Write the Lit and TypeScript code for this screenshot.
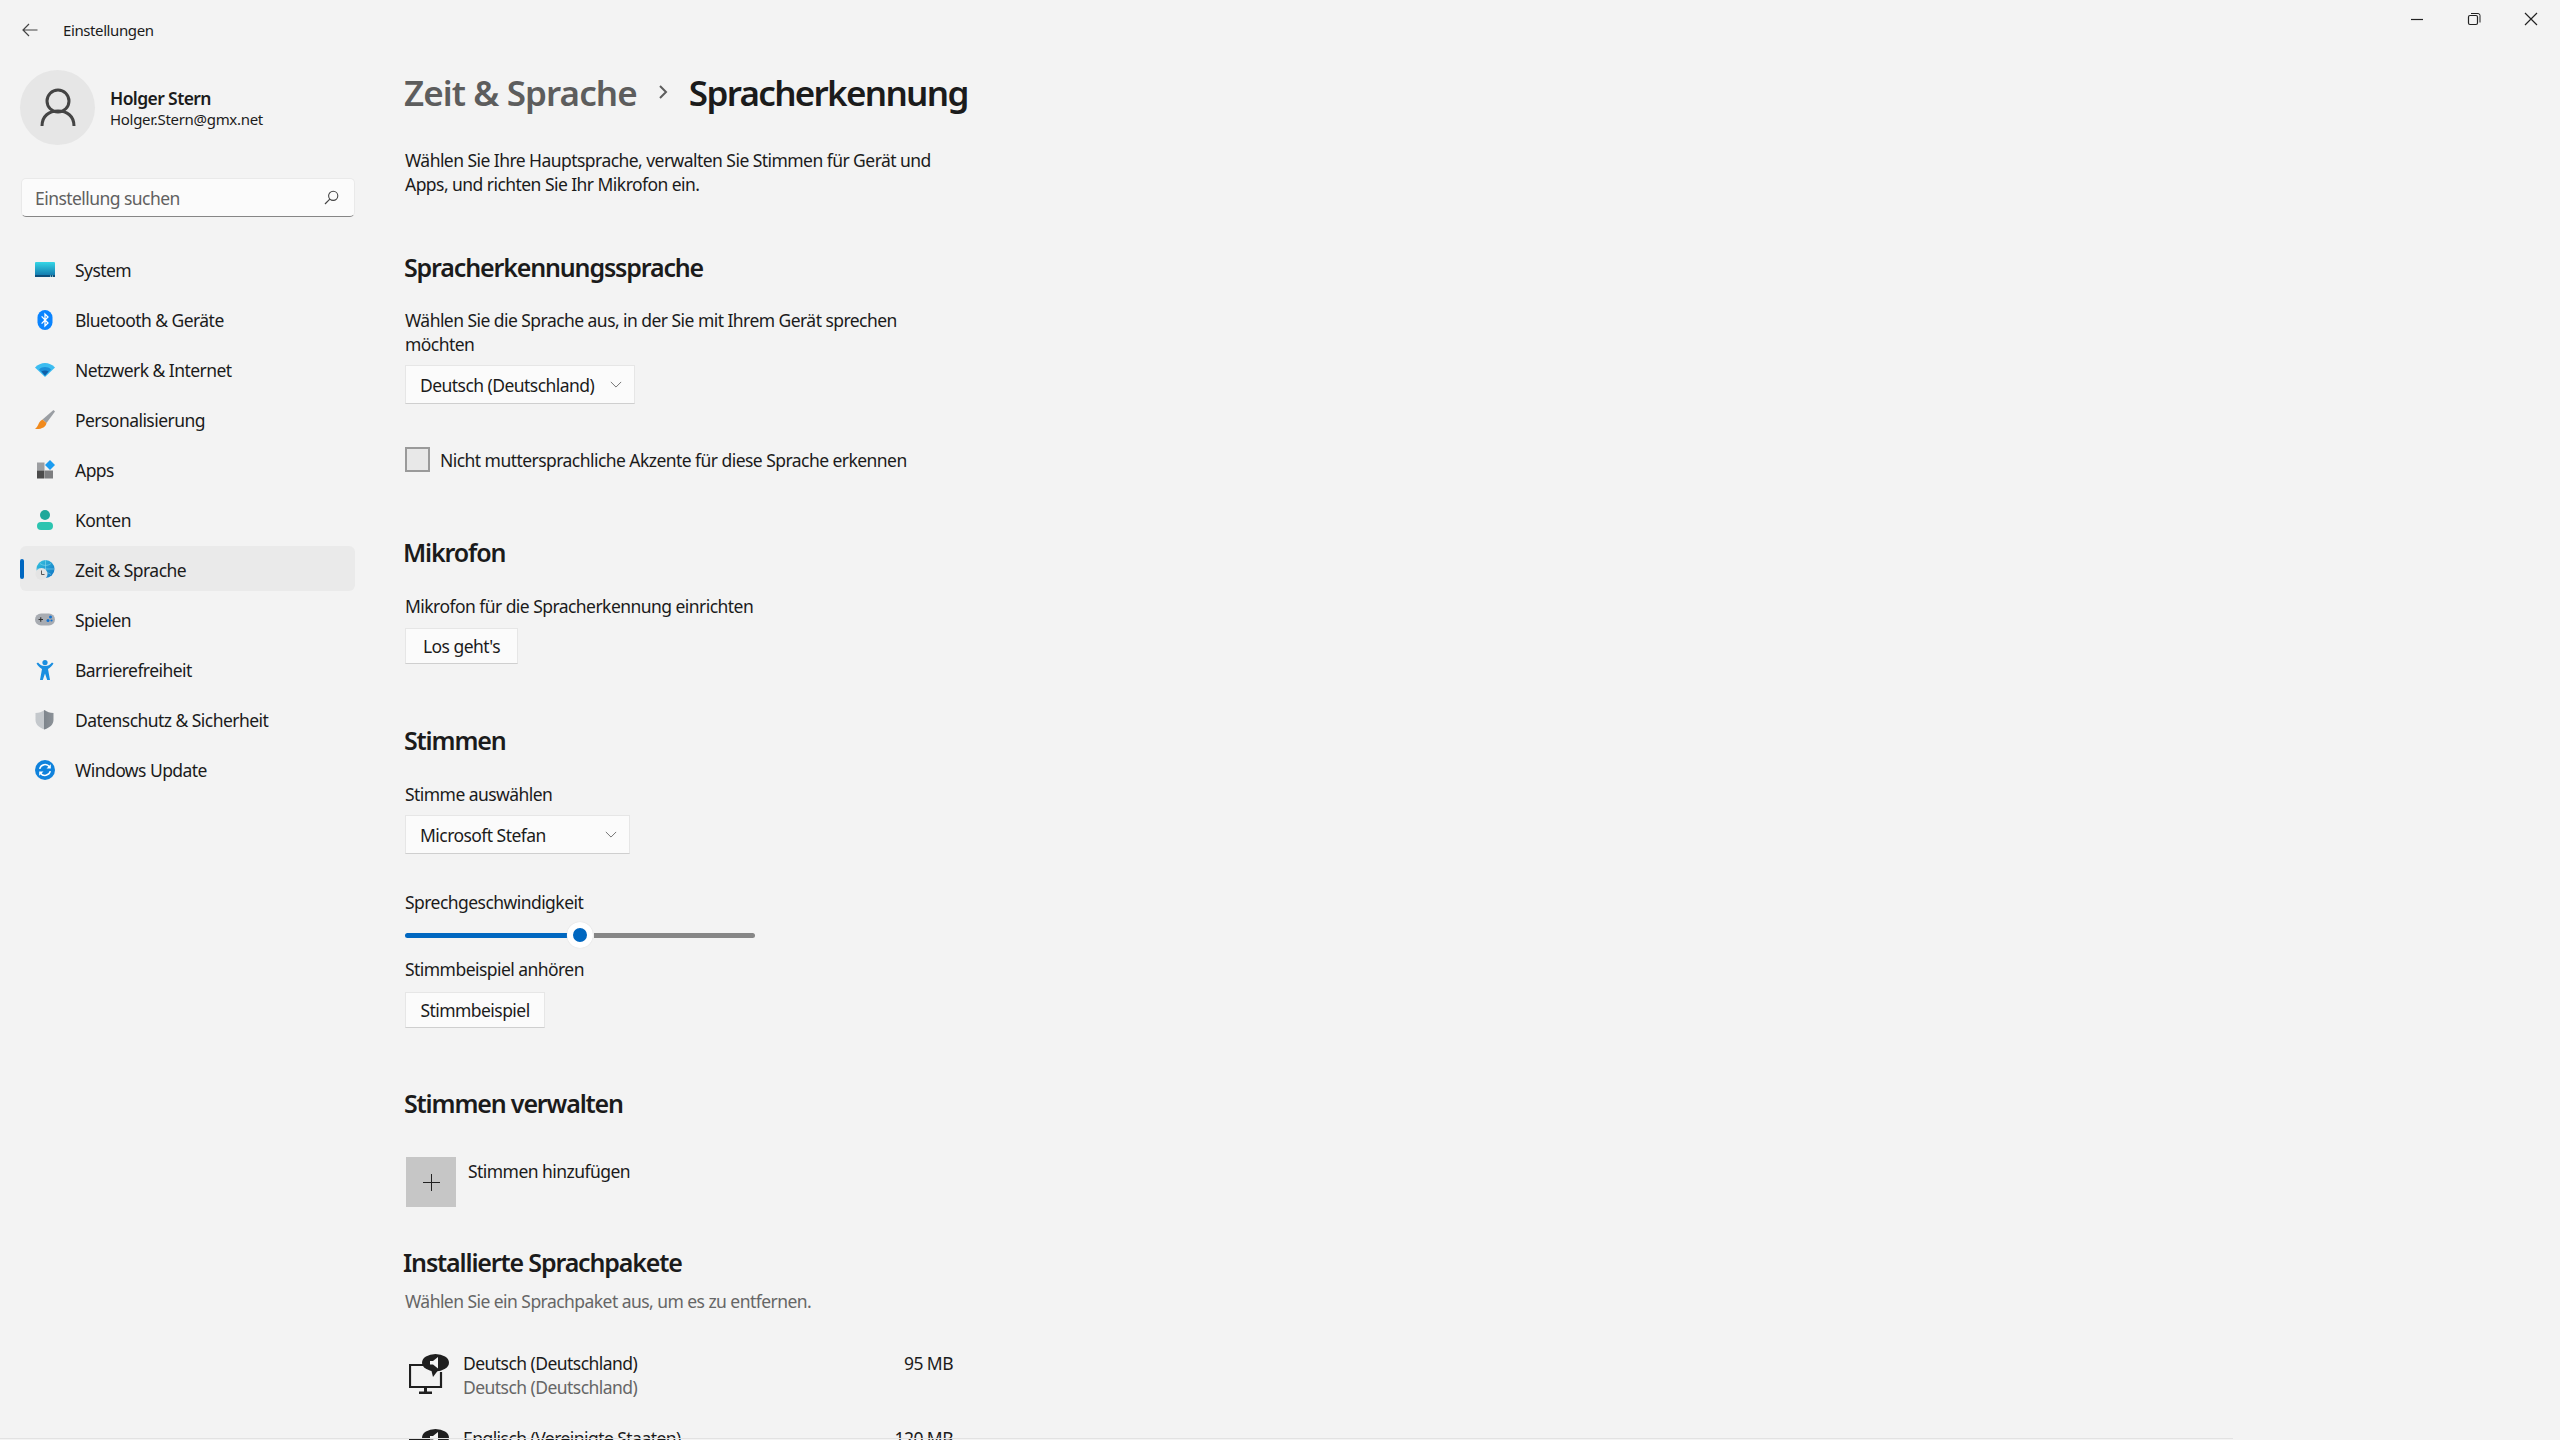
import { LitElement, css, html, svg } from "lit";
import { customElement } from "lit/decorators.js";

const navIcons: Record<string, unknown> = {
  system: svg`<defs><linearGradient id="sy" x1="0" y1="0" x2="0" y2="1"><stop offset="0" stop-color="#35d6e6"/><stop offset="1" stop-color="#0f6fa8"/></linearGradient></defs>
    <rect x="0" y="2" width="20" height="15" rx="1" fill="url(#sy)"/><rect x="0" y="15" width="20" height="2" fill="#0d4f7c"/><rect x="15" y="15.6" width="1" height="1" fill="#cfe"/><rect x="17" y="15.6" width="1" height="1" fill="#cfe"/>`,
  bluetooth: svg`<rect x="2.5" y="0" width="15" height="20" rx="7.5" fill="#0a84ff"/><path d="M6.6 6.4 13 13l-3 3V4l3 3-6.4 6.6" fill="none" stroke="#fff" stroke-width="1.3"/>`,
  network: svg`<path d="M0 7.5C5.5 1.5 14.500 1.500 20 7.500L10 17Z" fill="#3bbcf0"/><path d="M4 9.500C7.500 6.300 12.500 6.300 16 9.500L10 16Z" fill="#1b8fd8"/><path d="M6.500 11.500C8.500 10 11.500 10 13.500 11.500L10 15.500Z" fill="#0f5fa8"/>`,
  brush: svg`<path d="M18.500 0 20 1.500 11.500 13 7.500 9.500Z" fill="#9a9ea3"/><path d="M7.500 9.500 11.500 13C11 17 6.500 19.500 0 19 2.500 17 3 15 4 13 4.800 11.500 6 10.300 7.500 9.500Z" fill="#f08a1d"/>`,
  apps: svg`<rect x="2" y="2.500" width="7.500" height="8" fill="#9c9ea1"/><rect x="2" y="10.500" width="7.500" height="8" fill="#4b4b4b"/><rect x="10" y="10.500" width="8" height="8" fill="#7d7e80"/><path d="M15 0 20 5 15 10 10 5Z" fill="#1b9cf0"/>`,
  account: svg`<circle cx="10" cy="5" r="5" fill="#1fa89a"/><rect x="2" y="12" width="16" height="8" rx="4" fill="#2cc4b0"/>`,
  time: svg`<defs><linearGradient id="gl" x1="0" y1="0" x2="1" y2="1"><stop offset="0" stop-color="#37c6e0"/><stop offset="1" stop-color="#0f72c4"/></linearGradient></defs>
    <circle cx="10.500" cy="9" r="9" fill="url(#gl)"/><path d="M2 9H19M10.500 0V18M5 3.500C8 6 13 6 16 3.500M5 14.500C8 12 13 12 16 14.500" fill="none" stroke="#9fe3f2" stroke-width=".5"/>
    <circle cx="6.500" cy="14" r="6" fill="#e4e4e4"/><path d="M6.500 10.500V14.500H9.500" fill="none" stroke="#555" stroke-width="1"/>`,
  game: svg`<rect x="0" y="3.500" width="20" height="12" rx="6" fill="#a8acb2"/><path d="M3.500 9.500H8M5.750 7.200V11.800" stroke="#333" stroke-width="1.100"/><circle cx="15.500" cy="7" r="1.500" fill="#1272d0"/><circle cx="13" cy="10.500" r="1.500" fill="#1272d0"/><circle cx="16.500" cy="10.500" r="1.100" fill="#1272d0"/>`,
  access: svg`<circle cx="10" cy="2.600" r="2.600" fill="#1a8ee0"/><path d="M1.500 3.500 3 2.500C5 5 7 6 10 6S15 5 17 2.500L18.500 3.500C17 6 15 8 13 9L15 20H12.200L10 13.500 7.800 20H5L7 9C5 8 3 6 1.500 3.500Z" fill="#1a8ee0"/>`,
  shield: svg`<defs><linearGradient id="sh" x1="0" y1="0" x2="1" y2="0"><stop offset="0" stop-color="#c4c8cc"/><stop offset=".5" stop-color="#c4c8cc"/><stop offset=".5" stop-color="#7e858c"/><stop offset="1" stop-color="#8c9298"/></linearGradient></defs>
    <path d="M9.500 0C12 2 15 3 18.500 3V10C18.500 14.500 15 17.500 9.500 19.500 4 17.500.5 14.500.5 10V3C4 3 7 2 9.500 0Z" fill="url(#sh)"/>`,
  update: svg`<circle cx="10" cy="10" r="10" fill="#0f82dc"/><path d="M4.700 8.800A5.500 5.500 0 0 1 14.500 6.800M15.300 11.200A5.500 5.500 0 0 1 5.500 13.200" fill="none" stroke="#fff" stroke-width="1.500"/><path d="M15.800 4.200V8.500H11.500Z M4.200 15.800V11.500H8.500Z" fill="#fff"/>`,
};

const navItems = [
  ["system", "System"],
  ["bluetooth", "Bluetooth & Geräte"],
  ["network", "Netzwerk & Internet"],
  ["brush", "Personalisierung"],
  ["apps", "Apps"],
  ["account", "Konten"],
  ["time", "Zeit & Sprache"],
  ["game", "Spielen"],
  ["access", "Barrierefreiheit"],
  ["shield", "Datenschutz & Sicherheit"],
  ["update", "Windows Update"],
];

const chevron = html`<svg class="chev" viewBox="0 0 14 8"><path d="M1 1l6 6 6-6" fill="none" stroke="#5f5f5f" stroke-width="1"/></svg>`;

const packIcon = html`<svg class="pack-icon" viewBox="0 0 40 40">
  <path d="M14 11H1V33H32V18" fill="none" stroke="#1f1f1f" stroke-width="2.200"/>
  <path d="M15 33H18V37.500H23V40H10V37.500H15Z" fill="#1f1f1f"/>
  <ellipse cx="26.500" cy="8.700" rx="13.500" ry="8.700" fill="#1f1f1f"/><path d="M22 15 24 23 30 15Z" fill="#1f1f1f"/>
  <path d="M21 7H24L29 3V14.500L24 10.500H21Z" fill="#f3f3f3"/>
</svg>`;

@customElement("app-root")
export class AppRoot extends LitElement {
  static styles = css`
    :host {
      display: block;
      width: 2560px;
      height: 1440px;
      overflow: hidden;
      background: #f3f3f3;
      color: #1b1b1b;
      font-family: "Noto Sans", "Open Sans", sans-serif;
      font-size: 17.5px;
      letter-spacing: -0.55px;
      position: relative;
    }
    .titlebar {
      height: 46px;
      display: flex;
      align-items: center;
      padding: 14px 0 0 22px;
      box-sizing: border-box;
      font-size: 15px;
      letter-spacing: -0.4px;
    }
    .titlebar .back {
      width: 16px;
      height: 14px;
      margin-right: 25px;
    }
    .winctl {
      margin-left: auto;
      display: flex;
      gap: 41px;
      padding-right: 21px;
      margin-top: -22px;
    }
    .winctl svg {
      width: 16px;
      height: 16px;
    }
    .body {
      display: flex;
    }
    .side {
      width: 405px;
      flex: none;
      padding: 24px 0 0 20px;
      box-sizing: border-box;
    }
    .user {
      display: flex;
      align-items: center;
      gap: 15px;
    }
    .avatar {
      width: 75px;
      height: 75px;
      border-radius: 50%;
      background: #e6e6e6;
      display: flex;
      align-items: center;
      justify-content: center;
    }
    .avatar svg {
      width: 36px;
      height: 40px;
    }
    .name {
      font-weight: 600;
      font-size: 17.5px;
      line-height: 24px;
      letter-spacing: -0.6px;
    }
    .mail {
      font-size: 15px;
      line-height: 20px;
      letter-spacing: -0.3px;
      margin-top: -1px;
    }
    .search {
      width: 334px;
      height: 39px;
      margin: 33px 0 29px 1px;
      box-sizing: border-box;
      background: #fbfbfb;
      border: 1px solid #e9e9e9;
      border-bottom: 1px solid #868686;
      border-radius: 5px;
      display: flex;
      align-items: center;
      justify-content: space-between;
      padding: 0 15px 0 13px;
      color: #606060;
    }
    .search svg {
      width: 15px;
      height: 15px;
    }
    .nav {
      width: 335px;
      display: flex;
      flex-direction: column;
      gap: 5px;
    }
    .item {
      height: 45px;
      display: flex;
      align-items: center;
      padding: 2px 0 0 15px;
      box-sizing: border-box;
      gap: 20px;
      border-radius: 6px;
      position: relative;
    }
    .item.on {
      background: #eaeaea;
    }
    .item.on::before {
      content: "";
      position: absolute;
      left: 0;
      top: 13px;
      width: 4px;
      height: 20px;
      border-radius: 2px;
      background: #0067c0;
    }
    .item svg {
      width: 20px;
      height: 20px;
      flex: none;
    }
    .main {
      flex: 1;
      min-width: 0;
    }
    .crumb {
      display: flex;
      align-items: center;
      height: 50px;
      margin: 21px 0 0 -1px;
      font-size: 35px;
      font-weight: 600;
      letter-spacing: -1.68px;
      white-space: nowrap;
    }
    .crumb .parent {
      color: #5d5d5d;
      letter-spacing: -0.9px;
    }
    .crumb svg {
      width: 10px;
      height: 16px;
      margin: 0 21px 0 21px;
    }
    p {
      margin: 0;
      line-height: 24px;
      width: 540px;
    }
    h2 {
      margin: 0 0 0 -1px;
      font-size: 25px;
      font-weight: 600;
      line-height: 34px;
      letter-spacing: -1.15px;
    }
    .shift {
      margin-left: -2px;
    }
    .box {
      box-sizing: border-box;
      background: #fbfbfb;
      border: 1px solid #e6e6e6;
      border-bottom: 1px solid #cfcfcf;
      display: flex;
      align-items: center;
      white-space: nowrap;
    }
    .select {
      height: 39px;
      padding: 0 12px 0 14px;
      justify-content: space-between;
    }
    .chev {
      width: 12px;
      height: 7px;
    }
    .button {
      height: 36px;
      justify-content: center;
    }
    .check {
      display: flex;
      align-items: center;
      gap: 10px;
    }
    .check i {
      display: block;
      width: 25px;
      height: 25px;
      box-sizing: border-box;
      background: #e8e8e8;
      border: 2px solid #9a9a9a;
    }
    .slider {
      width: 350px;
      height: 30px;
      display: flex;
      align-items: center;
      position: relative;
    }
    .slider .fill {
      width: 163px;
      height: 5px;
      border-radius: 3px 0 0 3px;
      background: #0067c0;
    }
    .slider .rest {
      flex: 1;
      height: 5px;
      margin-left: 26px;
      border-radius: 0 3px 3px 0;
      background: #868686;
    }
    .slider .thumb {
      position: absolute;
      left: 162px;
      top: 2px;
      width: 26px;
      height: 26px;
      border-radius: 50%;
      background: #0067c0;
      border: 6.5px solid #fff;
      box-sizing: border-box;
      box-shadow: 0 0 1px #ccc;
    }
    .add {
      display: flex;
      gap: 12px;
      margin-left: 1px;
    }
    .add .plus {
      width: 50px;
      height: 50px;
      background: #c6c6c6;
      display: flex;
      align-items: center;
      justify-content: center;
    }
    .add .plus svg {
      width: 17px;
      height: 17px;
    }
    .add span {
      line-height: 24px;
      margin-top: 2px;
    }
    .muted {
      color: #666;
    }
    .pack {
      width: 548px;
      height: 75px;
      display: flex;
      gap: 14px;
    }
    .pack-icon {
      width: 40px;
      height: 40px;
      margin: 3px 0 0 4px;
      flex: none;
    }
    .pack-lines {
      flex: 1;
      line-height: 24px;
    }
    .edge {
      position: absolute;
      left: 0;
      bottom: 1px;
      width: 2233px;
      height: 1px;
      background: #e2e2e2;
    }
  `;

  render() {
    return html`
      <div class="titlebar">
        <svg class="back" viewBox="0 0 16 14"><path d="M15.500 7H1M7 1 1 7l6 6" fill="none" stroke="#444" stroke-width="1.200"/></svg>
        <span>Einstellungen</span>
        <div class="winctl">
          <svg viewBox="0 0 16 16"><path d="M2 8.500h12" stroke="#222" stroke-width="1.200"/></svg>
          <svg viewBox="0 0 16 16"><rect x="2.500" y="4.500" width="9" height="9" rx="1.500" fill="none" stroke="#222" stroke-width="1.200"/><path d="M5 2.500h7a2 2 0 0 1 2 2v7" fill="none" stroke="#222" stroke-width="1"/></svg>
          <svg viewBox="0 0 16 16"><path d="M2 2l12 12M14 2 2 14" stroke="#222" stroke-width="1.200"/></svg>
        </div>
      </div>
      <div class="body">
        <aside class="side">
          <div class="user">
            <div class="avatar">
              <svg viewBox="0 0 36 40"><circle cx="18" cy="13" r="11" fill="none" stroke="#444" stroke-width="3"/><path d="M2 38c0-10 7-15 16-15s16 5 16 15" fill="none" stroke="#444" stroke-width="3"/></svg>
            </div>
            <div>
              <div class="name">Holger Stern</div>
              <div class="mail">Holger.Stern@gmx.net</div>
            </div>
          </div>
          <div class="search">
            <span>Einstellung suchen</span>
            <svg viewBox="0 0 15 15"><circle cx="9.200" cy="5.800" r="4.600" fill="none" stroke="#444" stroke-width="1.100"/><path d="M5.800 9.200 1 14" stroke="#444" stroke-width="1.200"/></svg>
          </div>
          <nav class="nav">
            ${navItems.map(
              ([icon, label]) => html`<div class="item ${icon === "time" ? "on" : ""}">
                <svg viewBox="0 0 20 20">${navIcons[icon]}</svg>
                <span>${label}</span>
              </div>`
            )}
          </nav>
        </aside>
        <main class="main">
          <div class="crumb">
            <span class="parent">Zeit &amp; Sprache</span>
            <svg viewBox="0 0 10 16"><path d="M2 2l6 6-6 6" fill="none" stroke="#5d5d5d" stroke-width="2"/></svg>
            <span>Spracherkennung</span>
          </div>

          <p style="margin-top:31px">Wählen Sie Ihre Hauptsprache, verwalten Sie Stimmen für Gerät und Apps, und richten Sie Ihr Mikrofon ein.</p>

          <h2 style="margin-top:54px">Spracherkennungssprache</h2>
          <p style="margin-top:24px">Wählen Sie die Sprache aus, in der Sie mit Ihrem Gerät sprechen möchten</p>
          <div class="box select" style="width:230px;margin-top:9px"><span>Deutsch (Deutschland)</span>${chevron}</div>
          <label class="check" style="margin-top:43px"><i></i><span>Nicht muttersprachliche Akzente für diese Sprache erkennen</span></label>

          <h2 class="shift" style="margin-top:63px">Mikrofon</h2>
          <p style="margin-top:25px">Mikrofon für die Spracherkennung einrichten</p>
          <div class="box button" style="width:113px;margin-top:10px">Los geht's</div>

          <h2 style="margin-top:59px">Stimmen</h2>
          <p style="margin-top:25px">Stimme auswählen</p>
          <div class="box select" style="width:225px;margin-top:9px"><span>Microsoft Stefan</span>${chevron}</div>

          <p style="margin-top:36px">Sprechgeschwindigkeit</p>
          <div class="slider" style="margin-top:6px">
            <div class="fill"></div><div class="rest"></div><div class="thumb"></div>
          </div>
          <p style="margin-top:7px">Stimmbeispiel anhören</p>
          <div class="box button" style="width:140px;margin-top:11px">Stimmbeispiel</div>

          <h2 style="margin-top:58px">Stimmen verwalten</h2>
          <div class="add" style="margin-top:37px">
            <div class="plus"><svg viewBox="0 0 17 17"><path d="M8.500 0v17M0 8.500h17" stroke="#222" stroke-width="1"/></svg></div>
            <span>Stimmen hinzufügen</span>
          </div>

          <h2 class="shift" style="margin-top:38px">Installierte Sprachpakete</h2>
          <p class="muted" style="margin-top:10px">Wählen Sie ein Sprachpaket aus, um es zu entfernen.</p>

          <div style="margin-top:38px">
            <div class="pack">
              ${packIcon}
              <div class="pack-lines">Deutsch (Deutschland)<div class="muted">Deutsch (Deutschland)</div></div>
              <span style="line-height:24px">95 MB</span>
            </div>
            <div class="pack">
              ${packIcon}
              <div class="pack-lines">Englisch (Vereinigte Staaten)<div class="muted">Englisch (Vereinigte Staaten)</div></div>
              <span style="line-height:24px">120 MB</span>
            </div>
          </div>
        </main>
      </div>
      <div class="edge"></div>
    `;
  }
}
